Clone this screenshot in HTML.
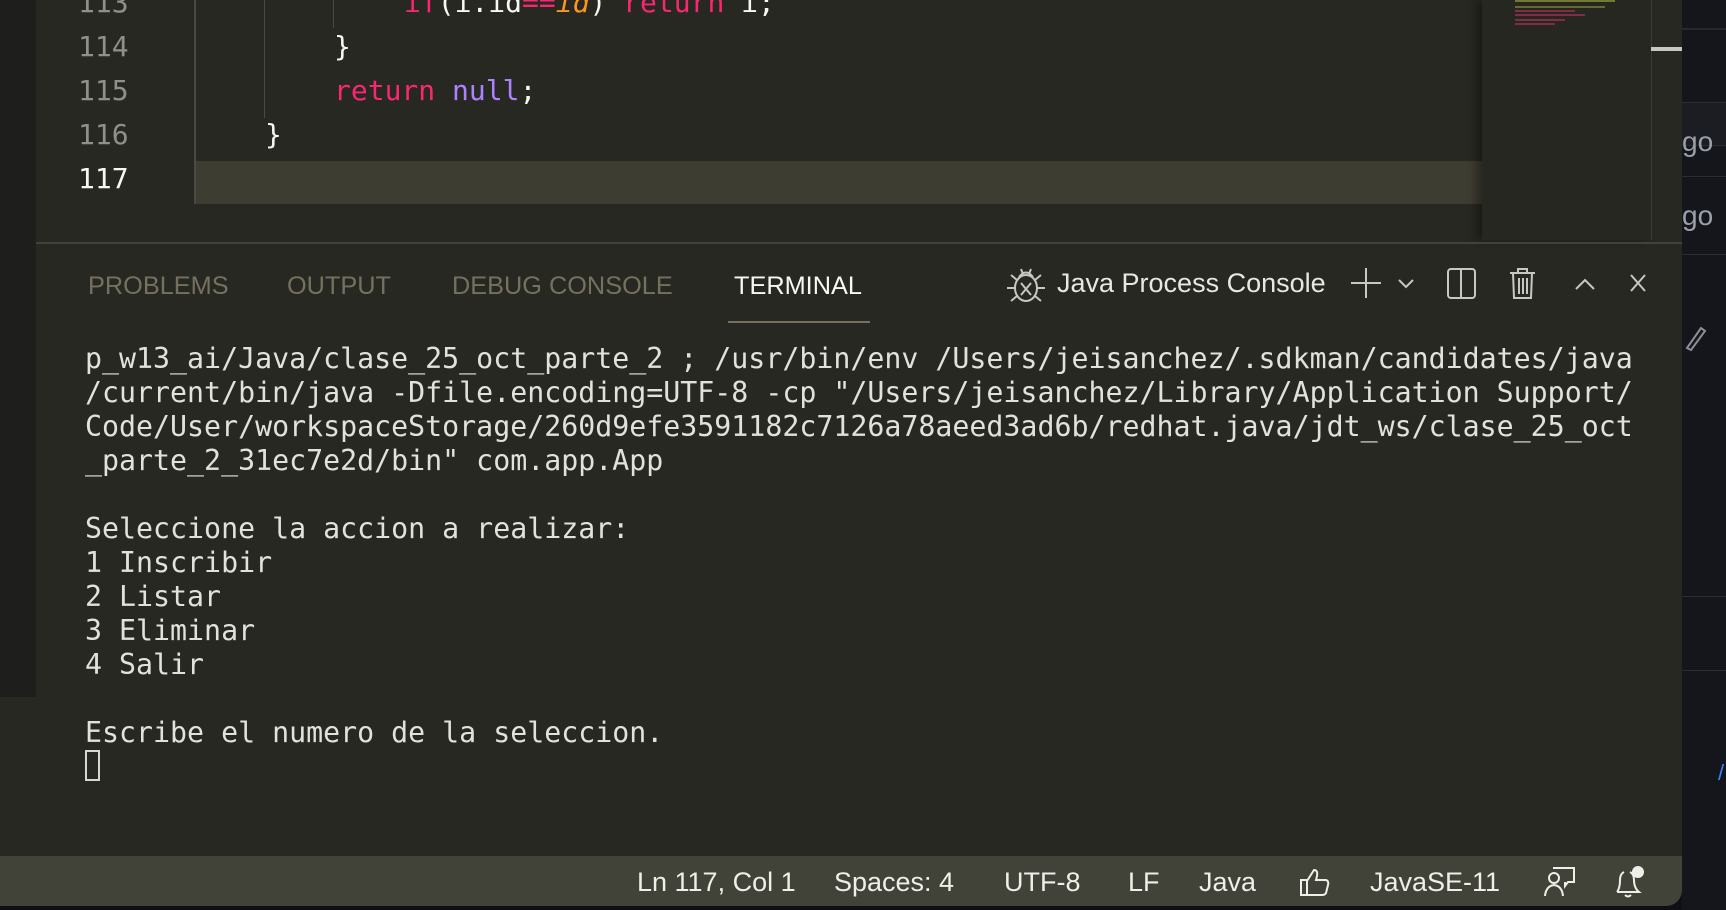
<!DOCTYPE html>
<html><head><meta charset="utf-8"><style>
*{margin:0;padding:0;box-sizing:border-box}
body{width:1726px;height:910px;background:#0f1013;overflow:hidden;position:relative;font-family:"Liberation Sans",sans-serif}
.abs{position:absolute}
.mono{font-family:"DejaVu Sans Mono","Liberation Mono",monospace}
.ln{position:absolute;left:78px;width:56px;font-size:28px;color:#90908a;height:44px;line-height:44px}
.code{position:absolute;font-size:28px;height:44px;line-height:44px;color:#f8f8f2;white-space:pre}
.k{color:#f92672}.p{color:#ae81ff}.o{color:#fd971f;font-style:italic}
.tab{position:absolute;top:270px;font-size:25.3px;color:#75715e;line-height:32px}
.term{position:absolute;left:85px;top:342px;font-size:28.25px;line-height:34px;color:#e2e2dc;white-space:pre}
.sb{position:absolute;top:866px;font-size:27px;color:#eeeeea;line-height:32px}
</style></head><body>
<div class="abs" style="left:1682px;top:0;width:44px;height:910px;background:#14161b"></div>
<div class="abs" style="left:1682px;top:28px;width:44px;height:2px;background:#262830"></div>
<div class="abs" style="left:1682px;top:102px;width:44px;height:44px;background:#1b1d23;border-top:1px solid #2b2d35;border-bottom:1px solid #2b2d35"></div>
<div class="abs" style="left:1682px;top:176px;width:44px;height:1px;background:#2b2d35"></div>
<div class="abs" style="left:1682px;top:254px;width:44px;height:1px;background:#2b2d35"></div>
<div class="abs" style="left:1682px;top:596px;width:44px;height:1px;background:#2b2d35"></div>
<div class="abs" style="left:1682px;top:670px;width:44px;height:1px;background:#2b2d35"></div>
<div class="abs" style="left:1682px;top:126px;font-size:28px;color:#9aa0aa;line-height:32px">go</div>
<div class="abs" style="left:1682px;top:200px;font-size:28px;color:#9aa0aa;line-height:32px">go</div>
<svg class="abs" style="left:1683px;top:322px" width="24" height="30"><path d="M4 26 L18 6 L22 9 L8 28 Z" fill="none" stroke="#8a8f99" stroke-width="2"/></svg>
<div class="abs" style="left:1718px;top:760px;width:6px;height:20px;color:#3b82f6;font-size:22px">/</div>
<div class="abs" style="left:0;top:0;width:1682px;height:906px;background:#272822;border-bottom-right-radius:16px;overflow:hidden">
  <div class="abs" style="left:0;top:0;width:36px;height:697px;background:#1e1f1c"></div>
  <div class="abs" style="left:195px;top:161px;width:1287px;height:43px;background:#3e3d32"></div>
  <div class="abs" style="left:194px;top:0;width:2px;height:204px;background:#4a4a42"></div>
  <div class="abs" style="left:264px;top:0;width:1px;height:118px;background:#4a4a42"></div>
  <div class="abs" style="left:333px;top:0;width:1px;height:28px;background:#4a4a42"></div>
  <div class="ln mono" style="top:-19px">113</div>
  <div class="ln mono" style="top:25px">114</div>
  <div class="ln mono" style="top:69px">115</div>
  <div class="ln mono" style="top:113px">116</div>
  <div class="ln mono" style="top:157px;color:#f8f8f2">117</div>
  <div class="code mono" style="left:404px;top:-19px"><span class="k">if</span>(i.id<span class="k">==</span><span class="o">id</span>) <span class="k">return</span> i;</div>
  <div class="code mono" style="left:334px;top:25px">}</div>
  <div class="code mono" style="left:334px;top:69px"><span class="k">return</span> <span class="p">null</span>;</div>
  <div class="code mono" style="left:265px;top:113px">}</div>
  <div class="abs" style="left:1482px;top:0;width:169px;height:240px;background:#262721;box-shadow:-6px 0 8px rgba(0,0,0,0.35)"></div>
  <div class="abs" style="left:1515px;top:0;width:100px;height:2px;background:#a6b03a;opacity:.6"></div>
  <div class="abs" style="left:1515px;top:6px;width:90px;height:2px;background:#a6b03a;opacity:.5"></div>
  <div class="abs" style="left:1515px;top:10px;width:60px;height:2px;background:#c03060;opacity:.6"></div>
  <div class="abs" style="left:1515px;top:14px;width:70px;height:2px;background:#c03060;opacity:.6"></div>
  <div class="abs" style="left:1515px;top:19px;width:50px;height:2px;background:#c03060;opacity:.6"></div>
  <div class="abs" style="left:1515px;top:23px;width:40px;height:2px;background:#c03060;opacity:.6"></div>
  <div class="abs" style="left:1651px;top:0;width:1px;height:240px;background:#3a3b34"></div>
  <div class="abs" style="left:1651px;top:47px;width:31px;height:4px;background:#c8c8c0"></div>
  <div class="abs" style="left:36px;top:242px;width:1646px;height:2px;background:#414339"></div>
  <div class="tab" style="left:88px">PROBLEMS</div>
  <div class="tab" style="left:287px">OUTPUT</div>
  <div class="tab" style="left:452px">DEBUG CONSOLE</div>
  <div class="tab" style="left:734px;color:#f8f8f2">TERMINAL</div>
  <div class="abs" style="left:728px;top:321px;width:142px;height:2px;background:#75715e"></div>
  <svg class="abs" style="left:1005px;top:265px" width="42" height="40" viewBox="0 0 42 40" fill="none" stroke="#c8c8c2" stroke-width="2">
    <ellipse cx="21" cy="23" rx="11" ry="13"/><path d="M14 12 Q21 3 28 12"/><path d="M16 4 L18 9 M26 4 L24 9"/><path d="M2 23 H10 M32 23 H40 M6 36 L12 31 M36 36 L30 31 M6 10 L12 15 M36 10 L30 15"/><path d="M16 18 L26 30 M26 18 L16 30"/>
  </svg>
  <div class="abs" style="left:1057px;top:267px;font-size:27px;color:#e8e8e2;line-height:32px">Java Process Console</div>
  <svg class="abs" style="left:1350px;top:265px" width="130" height="36" fill="none" stroke="#c8c8c2" stroke-width="2">
    <path d="M16 3 V33 M1 18 H31"/><path d="M49 15 L56 22 L63 15"/>
    <rect x="98" y="4" width="27" height="29" rx="3"/><path d="M111 4 V33"/>
  </svg>
  <svg class="abs" style="left:1505px;top:265px" width="175" height="36" fill="none" stroke="#c8c8c2" stroke-width="2">
    <path d="M5 8 H30 M13 8 V4 H22 V8"/><path d="M8 8 L9 33 H26 L27 8"/><path d="M14 13 V29 M18 13 V29 M22 13 V29"/>
    <path d="M71 24 L80 15 L89 24"/><path d="M126 10 L140 26 M140 10 L126 26"/>
  </svg>
  <div class="term mono">p_w13_ai/Java/clase_25_oct_parte_2 ; /usr/bin/env /Users/jeisanchez/.sdkman/candidates/java
/current/bin/java -Dfile.encoding=UTF-8 -cp "/Users/jeisanchez/Library/Application Support/
Code/User/workspaceStorage/260d9efe3591182c7126a78aeed3ad6b/redhat.java/jdt_ws/clase_25_oct
_parte_2_31ec7e2d/bin" com.app.App

Seleccione la accion a realizar:
1 Inscribir
2 Listar
3 Eliminar
4 Salir

Escribe el numero de la seleccion.</div>
  <div class="abs" style="left:85px;top:750px;width:15px;height:31px;border:2px solid #d8d8d2"></div>
  <div class="abs" style="left:0;top:856px;width:1682px;height:50px;background:#414339"></div>
  <div class="sb" style="left:637px">Ln 117, Col 1</div>
  <div class="sb" style="left:834px">Spaces: 4</div>
  <div class="sb" style="left:1004px">UTF-8</div>
  <div class="sb" style="left:1128px">LF</div>
  <div class="sb" style="left:1199px">Java</div>
  <svg class="abs" style="left:1298px;top:866px" width="34" height="32" fill="none" stroke="#eeeeea" stroke-width="2"><path d="M3 14 H9 V29 H3 Z M9 15 L16 4 Q20 4 19 10 L18 14 H28 Q31 15 30 19 L28 27 Q27 29 24 29 H9"/></svg>
  <div class="sb" style="left:1370px">JavaSE-11</div>
  <svg class="abs" style="left:1543px;top:864px" width="34" height="36" fill="none" stroke="#eeeeea" stroke-width="2"><circle cx="11" cy="14" r="5"/><path d="M2 32 Q3 22 11 21 Q19 22 20 32"/><path d="M10 4 H31 V18 H25 L22 22 V18"/></svg>
  <svg class="abs" style="left:1612px;top:864px" width="34" height="36" fill="none" stroke="#eeeeea" stroke-width="2"><path d="M5 28 H27 Q22 24 22 16 Q22 10 18 8 M12 8 Q8 10 8 16 Q8 24 5 28"/><path d="M13 31 Q16 34 19 31"/><circle cx="26" cy="8" r="5" fill="#eeeeea"/></svg>
</div>
</body></html>
